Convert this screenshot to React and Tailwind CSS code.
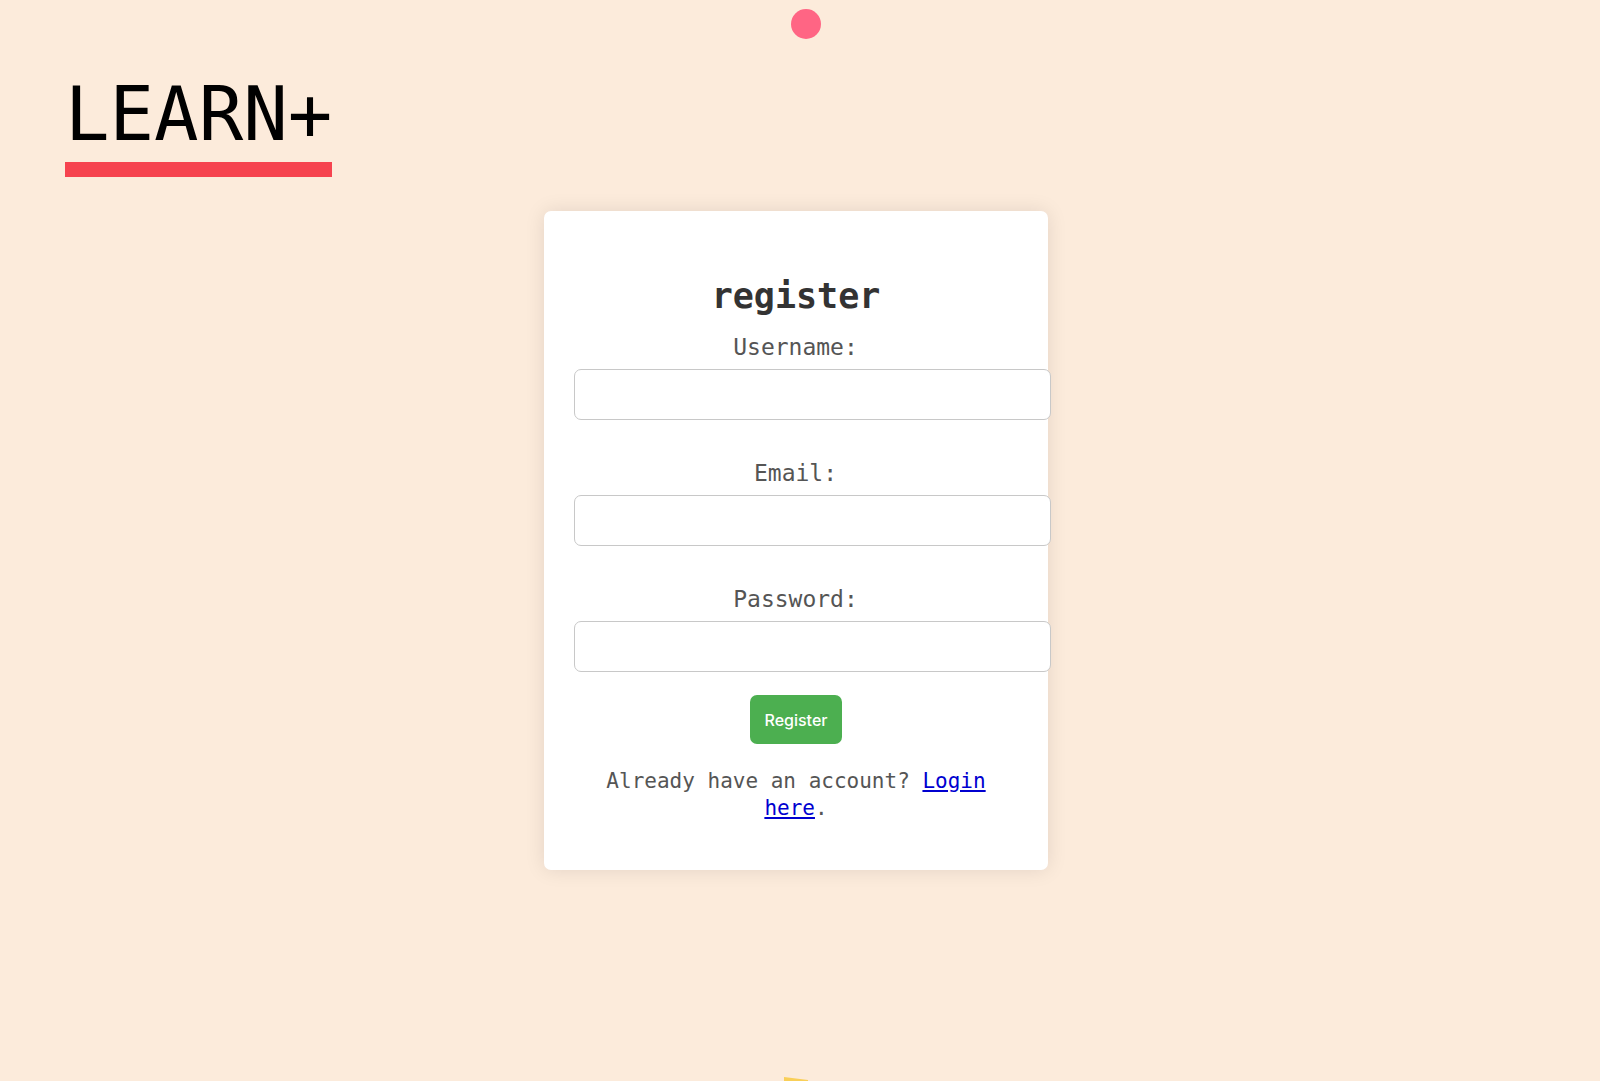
const FIELDS = [
  { id: "username", label: "Username:", type: "text" },
  { id: "email", label: "Email:", type: "email" },
  { id: "password", label: "Password:", type: "password" },
];

function Logo() {
  return (
    <div className="w-fit border-b-[15px] border-[#f6434f] pb-1 font-['DejaVu_Sans_Mono',monospace] text-[74px] leading-[88px] text-black">
      LEARN+
    </div>
  );
}

function Field({ id, label, type }) {
  return (
    <div className="mb-9 flex flex-col last:mb-0">
      <label htmlFor={id} className="mb-1 text-center text-[23px] leading-[35px] text-[#555]">
        {label}
      </label>
      <input
        id={id}
        name={id}
        type={type}
        className="-mr-[34px] h-[51px] rounded-[7px] border border-[#c8c8c8] bg-white px-4 text-xl outline-none"
      />
    </div>
  );
}

function RegisterCard() {
  return (
    <main className="w-full max-w-[504px] rounded-[7px] bg-white px-[30px] pt-[60px] pb-12 font-['DejaVu_Sans_Mono',monospace] shadow-[0_0_20px_rgba(0,0,0,0.1)]">
      <h1 className="mb-[9px] text-center text-[35px] leading-[50px] font-bold text-[#333]">register</h1>
      <form className="flex flex-col items-center" onSubmit={(e) => e.preventDefault()}>
        <div className="w-full pr-[1px]">
          {FIELDS.map((field) => (
            <Field key={field.id} {...field} />
          ))}
        </div>
        <button
          type="submit"
          className="mt-[23px] h-[49px] rounded-[7px] bg-[#4caf50] px-[15px] font-['Inter',sans-serif] text-base font-medium text-white"
        >
          Register
        </button>
      </form>
      <p className="mt-6 text-center text-[21px] leading-[27px] text-[#555]">
        Already have an account?{" "}
        <a href="#login" className="text-[#0000d0] underline">
          Login here
        </a>
        .
      </p>
    </main>
  );
}

export default function App() {
  return (
    <div className="relative min-h-screen overflow-hidden bg-[#fcebdb]">
      <div className="absolute top-[9px] left-1/2 ml-[-9px] size-[30px] rounded-full bg-[#ff6584]" />
      <header className="px-[65px] pt-[70px]">
        <Logo />
      </header>
      <div className="flex justify-center pt-[34px] pr-2">
        <RegisterCard />
      </div>
      <svg
        className="absolute bottom-0 left-1/2 ml-[-16px] h-1 w-6"
        viewBox="0 0 24 4"
        aria-hidden="true"
      >
        <path d="M0 0L24 3V4H0Z" fill="#f9cf58" />
      </svg>
    </div>
  );
}
